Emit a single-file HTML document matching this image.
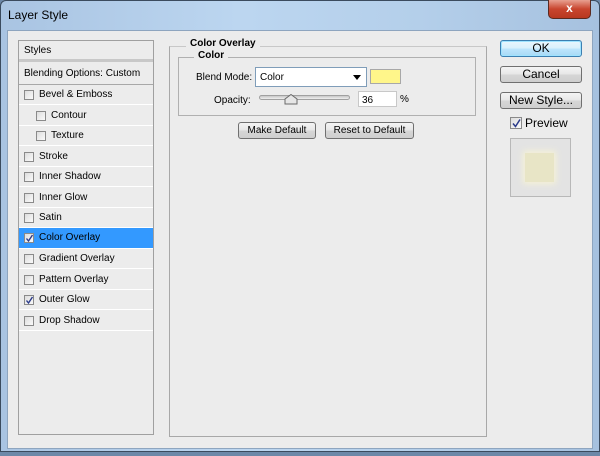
<!DOCTYPE html>
<html><head><style>
*{margin:0;padding:0;box-sizing:border-box}
body{width:600px;height:456px;overflow:hidden;font-family:"Liberation Sans",sans-serif;font-size:10px;color:#000;background:#6d88a8;position:relative}
.frame{position:absolute;left:0;top:0;width:600px;height:452px;background:linear-gradient(90deg,#a9c4e2 0,#bcd6f0 40%,#b4cfea 70%,#a6c1df 100%);border:1px solid #3b4b5e;border-radius:6px 6px 0 0}
.title{position:absolute;left:8px;top:8px;font-size:12px;color:#000}
.close{position:absolute;left:548px;top:0;width:43px;height:19px;background:linear-gradient(#e8a090,#c8452e 50%,#b83820);border:1px solid #5a2a20;border-top:none;border-radius:0 0 5px 5px;color:#fff;font:bold 12px "Liberation Sans",sans-serif;text-align:center;line-height:17px}
.client{position:absolute;left:7px;top:30px;width:586px;height:419px;background:#ececec;border:1px solid #8ea5bf}
.abs{position:absolute}
.lp{left:18px;top:40px;width:136px;height:395px;border:1px solid #a0a0a0;background:#ececec}
.row{position:absolute;left:0;width:134px;height:20px;border-bottom:1px solid #fff;line-height:20px;padding-left:5px;font-size:10px}
.cb{position:absolute;width:10px;height:10px;border:1px solid #8a8a8a;background:linear-gradient(135deg,#ddd,#fafafa);top:5px}
.cb svg{position:absolute;left:0;top:0}
.btn{position:absolute;border:1px solid #707070;border-radius:3px;background:linear-gradient(#f4f4f4 0,#e6e6e6 50%,#d6d6d6 51%,#cfcfcf);text-align:center;font-size:11px}
</style></head><body>
<div class="frame"></div>
<div class="title">Layer Style</div>
<div class="close">x</div>
<div class="client"></div>
<div class="abs lp">
<div class="row" style="top:0;height:21px;border-bottom:3px solid #c8c8c8;line-height:20px">Styles</div>
<div class="row" style="top:22px;height:22px;border-bottom:1px solid #a8a8a8;line-height:21px">Blending Options: Custom</div>
<div class="row" style="top:44px"><span class="cb" style="left:5px"></span><span style="padding-left:15px">Bevel &amp; Emboss</span></div>
<div class="row" style="top:64.5px"><span class="cb" style="left:17px"></span><span style="padding-left:27px">Contour</span></div>
<div class="row" style="top:85px"><span class="cb" style="left:17px"></span><span style="padding-left:27px">Texture</span></div>
<div class="row" style="top:105.5px"><span class="cb" style="left:5px"></span><span style="padding-left:15px">Stroke</span></div>
<div class="row" style="top:126px"><span class="cb" style="left:5px"></span><span style="padding-left:15px">Inner Shadow</span></div>
<div class="row" style="top:146.5px"><span class="cb" style="left:5px"></span><span style="padding-left:15px">Inner Glow</span></div>
<div class="row" style="top:167px"><span class="cb" style="left:5px"></span><span style="padding-left:15px">Satin</span></div>
<div class="row" style="top:187px;background:#3399ff;height:21px"><span class="cb" style="left:5px"><svg width="9" height="9"><path d="M1.5 4.5 L3.5 7 L7.5 1" stroke="#2a3a8a" stroke-width="1.4" fill="none"/></svg></span><span style="padding-left:15px">Color Overlay</span></div>
<div class="row" style="top:208px"><span class="cb" style="left:5px"></span><span style="padding-left:15px">Gradient Overlay</span></div>
<div class="row" style="top:228.5px"><span class="cb" style="left:5px"></span><span style="padding-left:15px">Pattern Overlay</span></div>
<div class="row" style="top:249px"><span class="cb" style="left:5px"><svg width="9" height="9"><path d="M1.5 4.5 L3.5 7 L7.5 1" stroke="#2a3a8a" stroke-width="1.4" fill="none"/></svg></span><span style="padding-left:15px">Outer Glow</span></div>
<div class="row" style="top:269.5px"><span class="cb" style="left:5px"></span><span style="padding-left:15px">Drop Shadow</span></div>
</div>
<div class="abs" style="left:169px;top:46px;width:318px;height:391px;border:1px solid #a8a8a8;border-top-color:#c8c8c8"></div>
<div class="abs" style="left:186px;top:38px;background:#ececec;padding:0 4px;font-weight:bold;font-size:10px">Color Overlay</div>
<div class="abs" style="left:178px;top:57px;width:298px;height:59px;border:1px solid #b0b0b0"></div>
<div class="abs" style="left:194px;top:50px;background:#ececec;padding:0 4px;font-weight:bold;font-size:10px">Color</div>
<div class="abs" style="left:196px;top:72px;font-size:10px">Blend Mode:</div>
<div class="abs" style="left:255px;top:67px;width:112px;height:20px;background:#fff;border:1px solid #7f9db9;padding:4px 0 0 4px;font-size:10px">Color<svg style="position:absolute;right:5px;top:7px" width="8" height="5"><path d="M0 0H8L4 5Z" fill="#000"/></svg></div>
<div class="abs" style="left:370px;top:69px;width:31px;height:15px;background:#fff68a;border:1px solid #a8a8a8"></div>
<div class="abs" style="left:214px;top:95px;font-size:10px">Opacity:</div>
<div class="abs" style="left:259px;top:95px;width:91px;height:5px;border:1px solid #a0a0a0;border-radius:3px;background:linear-gradient(#c8c8c8,#eee)"></div>
<svg class="abs" style="left:284px;top:94px" width="14" height="11"><path d="M1 10 V5 L7 0.5 L13 5 V10 Z" fill="#e6e6e6" stroke="#6a6a6a"/></svg>
<div class="abs" style="left:358px;top:91px;width:39px;height:16px;background:#fff;border:1px solid #c8c8c8;padding:3px 0 0 3px;font-size:10px">36</div>
<div class="abs" style="left:400px;top:94px;font-size:10px">%</div>
<div class="btn" style="left:238px;top:122px;width:78px;height:17px;font-size:10px;line-height:15px">Make Default</div>
<div class="btn" style="left:325px;top:122px;width:89px;height:17px;font-size:10px;line-height:15px">Reset to Default</div>
<div class="btn" style="left:500px;top:40px;width:82px;height:17px;border-color:#3c7fb1;background:linear-gradient(#eaf6fd,#d9f0fc 50%,#bee6fd 51%,#a7d9f5);box-shadow:inset 0 0 0 1px #9fe3ff;line-height:15px;font-size:12px">OK</div>
<div class="btn" style="left:500px;top:66px;width:82px;height:17px;line-height:15px;font-size:12px">Cancel</div>
<div class="btn" style="left:500px;top:92px;width:82px;height:17px;line-height:15px;font-size:12px">New Style...</div>
<div class="abs cb" style="left:510px;top:117px;width:12px;height:12px"><svg width="11" height="11"><path d="M2 5.5 L4.5 8.5 L9 1.5" stroke="#2a3a8a" stroke-width="1.5" fill="none"/></svg></div>
<div class="abs" style="left:525px;top:116px;font-size:12px">Preview</div>
<div class="abs" style="left:510px;top:138px;width:61px;height:59px;border:1px solid #b8b8b8;background:#e3e3e3"></div>
<div class="abs" style="left:525px;top:153px;width:29px;height:29px;background:#e8e5c6;box-shadow:0 0 6px 2px #f6f2d6"></div>
</body></html>
